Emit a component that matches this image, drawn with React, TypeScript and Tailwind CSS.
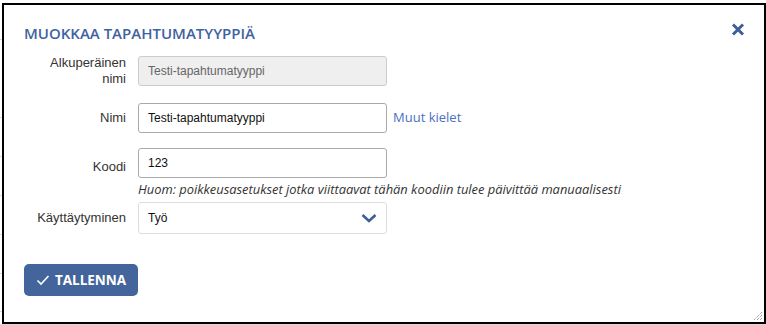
import React from "react";

const rowHeights = [40, 78, 39, 39, 39, 39, 38, 13];

function Background() {
  return (
    <div className="flex flex-col">
      {rowHeights.map((h, i) => (
        <div
          key={i}
          className="border-b border-[#d9d9d9]"
          style={{ height: h }}
        />
      ))}
    </div>
  );
}

export default function App() {
  const sans = { fontFamily: "'Liberation Sans', Arial, sans-serif" };
  const open = { fontFamily: "'Open Sans', 'Noto Sans', sans-serif" };
  return (
    <div className="relative w-[766px] h-[325px] bg-white overflow-hidden">
      <Background />
      <div className="absolute left-[2px] top-[3px] w-[764px] h-[321px] border-2 border-black bg-white">
        <div className="relative h-full pl-[20px] pt-[18px]">
          <button className="absolute right-[19px] top-[18px] text-[#3d5f99]">
            <svg width="14" height="13" viewBox="0 0 14 13">
              <path
                d="M2 1.5 L12 11.5 M12 1.5 L2 11.5"
                stroke="currentColor"
                strokeWidth="3"
                strokeLinecap="butt"
              />
            </svg>
          </button>
          <h2
            className="text-[15px] leading-[20px] font-semibold text-[#3f62a0]"
            style={open}
          >
            MUOKKAA TAPAHTUMATYYPPIÄ
          </h2>

          <div className="flex flex-col" style={sans}>
            {/* Row 1 */}
            <div className="flex items-center h-[30px] mt-[13px]">
              <label className="w-[102px] text-right text-[13px] leading-4 text-[#333]">
                Alkuperäinen nimi
              </label>
              <div className="ml-[12px] w-[249px] h-[30px] flex items-center px-[9px] border border-[#cccccc] rounded-[3px] bg-[#efefef] text-[12px] text-[#666]">
                Testi-tapahtumatyyppi
              </div>
            </div>
            {/* Row 2 */}
            <div className="flex items-center h-[30px] mt-[17px]">
              <label className="w-[102px] text-right text-[13px] leading-4 text-[#333]">
                Nimi
              </label>
              <div className="ml-[12px] w-[249px] h-[30px] flex items-center px-[9px] border border-[#aaaaaa] rounded-[3px] bg-white text-[12px] text-[#111]">
                Testi-tapahtumatyyppi
              </div>
              <a className="ml-[6px] text-[13px] text-[#4a70c0]" style={open}>
                Muut kielet
              </a>
            </div>
            {/* Row 3 */}
            <div className="flex items-start mt-[15px]">
              <label className="w-[102px] pt-[11px] text-right text-[13px] leading-4 text-[#333]">
                Koodi
              </label>
              <div className="ml-[12px] flex flex-col">
                <div className="w-[249px] h-[30px] flex items-center px-[9px] border border-[#aaaaaa] rounded-[3px] bg-white text-[12px] text-[#111]">
                  123
                </div>
                <div
                  className="mt-[2px] text-[12.9px] leading-[18px] italic text-[#333] whitespace-nowrap"
                  style={open}
                >
                  Huom: poikkeusasetukset jotka viittaavat tähän koodiin tulee päivittää manuaalisesti
                </div>
              </div>
            </div>
            {/* Row 4 */}
            <div className="flex items-center mt-[4px]">
              <label className="w-[102px] text-right text-[13px] leading-4 text-[#333]">
                Käyttäytyminen
              </label>
              <div className="ml-[12px] w-[249px] h-[32px] flex items-center justify-between pl-[9px] pr-[9px] border border-[#dddddd] rounded-[3px] bg-white text-[12px] text-[#111]">
                <span>Työ</span>
                <svg width="16" height="10" viewBox="0 0 16 10">
                  <path
                    d="M1.5 2 L8 8 L14.5 2"
                    fill="none"
                    stroke="#3d5f99"
                    strokeWidth="2.6"
                  />
                </svg>
              </div>
            </div>
            {/* Button */}
            <div className="mt-[30px]">
              <button
                className="w-[114px] h-[32px] rounded-[5px] bg-[#43659c] text-white flex items-center justify-center gap-[5px] text-[13.5px] font-bold"
                style={open}
              >
                <svg width="14" height="12" viewBox="0 0 14 12">
                  <path
                    d="M1.5 6.5 L5 10 L12.5 2"
                    fill="none"
                    stroke="white"
                    strokeWidth="1.6"
                  />
                </svg>
                TALLENNA
              </button>
            </div>
          </div>

          <svg
            className="absolute right-[1px] bottom-[1px]"
            width="10"
            height="10"
            viewBox="0 0 10 10"
          >
            <path
              d="M9 1 L1 9 M9 4 L4 9 M9 7 L7 9"
              stroke="#777"
              strokeWidth="1"
              strokeDasharray="1 1"
            />
          </svg>
        </div>
      </div>
    </div>
  );
}
